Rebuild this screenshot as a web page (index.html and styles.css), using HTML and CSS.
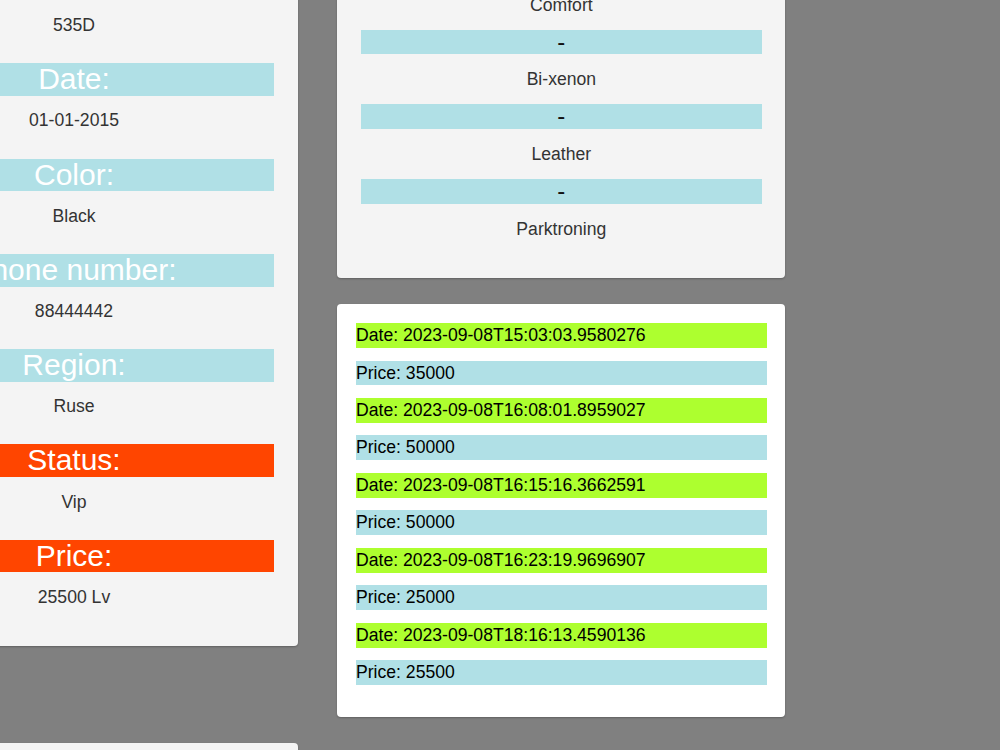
FILE: index.html
```html
<!DOCTYPE html>
<html lang="en">
<head>
<meta charset="utf-8">
<title>Car details</title>
<link rel="stylesheet" href="styles.css">
</head>
<body>
<main class="page">
  <section class="column column-left">
    <article class="card details">
      <h2 class="label">Model:</h2>
      <p class="value value-first">535D</p>
      <h2 class="label">Date:</h2>
      <p class="value">01-01-2015</p>
      <h2 class="label">Color:</h2>
      <p class="value">Black</p>
      <h2 class="label">Phone number:</h2>
      <p class="value">88444442</p>
      <h2 class="label">Region:</h2>
      <p class="value">Ruse</p>
      <h2 class="label label-hot">Status:</h2>
      <p class="value">Vip</p>
      <h2 class="label label-hot">Price:</h2>
      <p class="value">25500 Lv</p>
    </article>
    <article class="card details details-next">
      <h2 class="label">Make:</h2>
      <p class="value">BMW</p>
    </article>
  </section>

  <section class="column column-right">
    <article class="card extras">
      <div class="sep">-</div>
      <div class="extra">Comfort</div>
      <div class="sep">-</div>
      <div class="extra">Bi-xenon</div>
      <div class="sep">-</div>
      <div class="extra">Leather</div>
      <div class="sep">-</div>
      <div class="extra">Parktroning</div>
    </article>
    <article class="card history">
      <p class="hist hist-date">Date: 2023-09-08T15:03:03.9580276</p>
      <p class="hist hist-price">Price: 35000</p>
      <p class="hist hist-date">Date: 2023-09-08T16:08:01.8959027</p>
      <p class="hist hist-price">Price: 50000</p>
      <p class="hist hist-date">Date: 2023-09-08T16:15:16.3662591</p>
      <p class="hist hist-price">Price: 50000</p>
      <p class="hist hist-date">Date: 2023-09-08T16:23:19.9696907</p>
      <p class="hist hist-price">Price: 25000</p>
      <p class="hist hist-date">Date: 2023-09-08T18:16:13.4590136</p>
      <p class="hist hist-price">Price: 25500</p>
    </article>
  </section>
</main>
</body>
</html>
```

FILE: styles.css
```css
html, body {
  margin: 0;
  padding: 0;
  height: 100%;
  overflow: hidden;
}

body {
  background: #808080;
  font-family: "Liberation Sans", Arial, sans-serif;
  font-size: 17.6px;
  color: #333;
}

.page {
  display: flex;
  align-items: flex-start;
  gap: 39px;
  margin-left: -150px;
}

.column {
  display: flex;
  flex-direction: column;
  width: 448px;
}

.column-left {
  margin-top: -56.7px;
}

.column-right {
  margin-top: -69px;
  gap: 26px;
}

.card {
  box-sizing: border-box;
  width: 448px;
  background: #f4f4f4;
  border-radius: 4px;
  box-shadow: 0 1px 2px rgba(0, 0, 0, 0.25);
}

/* vehicle details card */
.details {
  padding: 24px 24px 11.4px 24px;
}

.details-next {
  margin-top: 96.6px;
  padding-bottom: 40px;
}

.label {
  margin: 0;
  height: 32.7px;
  line-height: 32.7px;
  font-size: 30px;
  font-weight: normal;
  text-align: center;
  color: #fff;
  background: #b0e0e6;
}

.label-hot {
  background: #ff4500;
}

.value {
  margin: 14.5px 0 28.1px;
  height: 20px;
  line-height: 20px;
  text-align: center;
  color: #333;
}

.value-first {
  margin-top: 15.2px;
}

/* extras list card */
.extras {
  padding: 24px 23.3px 24.6px 24px;
}

.sep {
  height: 24.7px;
  line-height: 24.7px;
  font-size: 24px;
  text-align: center;
  color: #111;
  background: #b0e0e6;
}

.extra {
  height: 50px;
  line-height: 50px;
  text-align: center;
  color: #333;
}

/* price history card */
.history {
  background: #fff;
  padding: 18.7px 18px 19px 19px;
}

.hist {
  margin: 0 0 12.8px;
  height: 24.7px;
  line-height: 24.7px;
  color: #000;
}

.hist-date {
  background: #adff2f;
}

.hist-price {
  background: #b0e0e6;
}
```
